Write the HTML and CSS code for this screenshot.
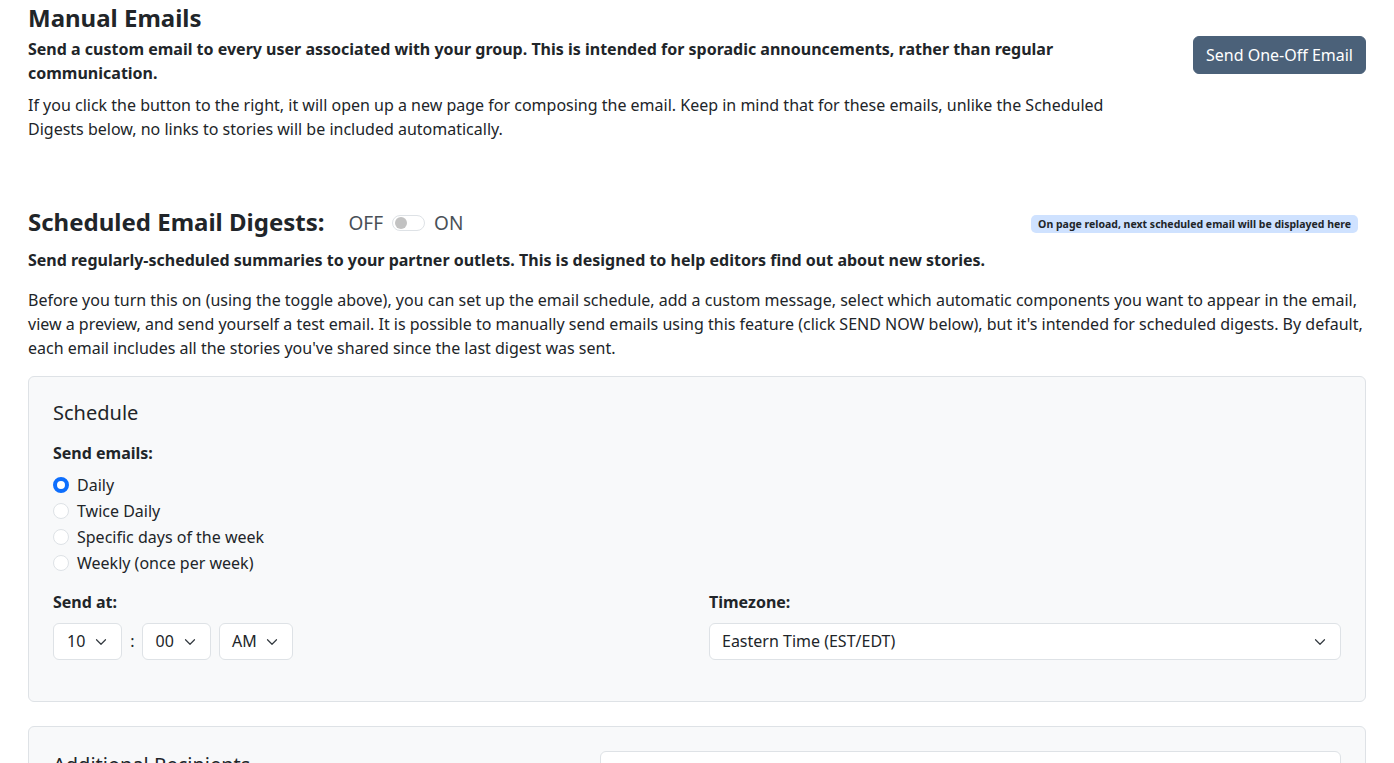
FILE: index.html
```html
<!DOCTYPE html>
<html lang="en">
<head>
<meta charset="utf-8">
<title>Email Settings</title>
<link rel="stylesheet" href="styles.css">
</head>
<body>
<main class="page">
  <section class="manual">
    <h4 class="title">Manual Emails</h4>
    <div class="manual-row">
      <div class="manual-text">
        <p class="lead-bold">Send a custom email to every user associated with your group. This is intended for sporadic announcements, rather than regular communication.</p>
        <p class="body-text">If you click the button to the right, it will open up a new page for composing the email. Keep in mind that for these emails, unlike the Scheduled Digests below, no links to stories will be included automatically.</p>
      </div>
      <div class="manual-action">
        <button class="btn-slate" type="button">Send One-Off Email</button>
      </div>
    </div>
  </section>

  <section class="digests">
    <div class="digest-head">
      <h4 class="title title-inline">Scheduled Email Digests:</h4>
      <div class="toggle-group">
        <span class="toggle-label">OFF</span>
        <span class="switch"><span class="knob"></span></span>
        <span class="toggle-label">ON</span>
      </div>
      <span class="badge">On page reload, next scheduled email will be displayed here</span>
    </div>
    <p class="lead-bold digest-lead">Send regularly-scheduled summaries to your partner outlets. This is designed to help editors find out about new stories.</p>
    <p class="body-text digest-body">Before you turn this on (using the toggle above), you can set up the email schedule, add a custom message, select which automatic components you want to appear in the email, view a preview, and send yourself a test email. It is possible to manually send emails using this feature (click SEND NOW below), but it's intended for scheduled digests. By default, each email includes all the stories you've shared since the last digest was sent.</p>

    <div class="card">
      <h5 class="card-title">Schedule</h5>
      <div class="form-label">Send emails:</div>
      <div class="radios">
        <label class="check"><span class="radio checked"></span>Daily</label>
        <label class="check"><span class="radio"></span>Twice Daily</label>
        <label class="check"><span class="radio"></span>Specific days of the week</label>
        <label class="check"><span class="radio"></span>Weekly (once per week)</label>
      </div>
      <div class="grid-2">
        <div class="col">
          <div class="form-label form-label-lg">Send at:</div>
          <div class="time-row">
            <div class="select">10<svg class="chev" viewBox="0 0 16 16"><path d="M2 5l6 6 6-6"/></svg></div>
            <span class="colon">:</span>
            <div class="select">00<svg class="chev" viewBox="0 0 16 16"><path d="M2 5l6 6 6-6"/></svg></div>
            <div class="select select-ampm">AM<svg class="chev" viewBox="0 0 16 16"><path d="M2 5l6 6 6-6"/></svg></div>
          </div>
        </div>
        <div class="col">
          <div class="form-label form-label-lg">Timezone:</div>
          <div class="select select-wide">Eastern Time (EST/EDT)<svg class="chev" viewBox="0 0 16 16"><path d="M2 5l6 6 6-6"/></svg></div>
        </div>
      </div>
    </div>

    <div class="card card-2">
      <div class="grid-57">
        <h5 class="card-title">Additional Recipients</h5>
        <div class="input"></div>
      </div>
    </div>
  </section>
</main>
</body>
</html>
```
FILE: styles.css
```css
* { box-sizing: border-box; }
html, body { margin: 0; padding: 0; background: #ffffff; }
body {
  font-family: "Noto Sans", "DejaVu Sans", sans-serif;
  font-size: 16px;
  line-height: 24px;
  color: #212529;
  overflow: hidden;
  height: 763px;
}
.page { padding: 4px 28px 0 28px; }
p { margin: 0; }

.title {
  font-size: 24px;
  line-height: 28.8px;
  font-weight: 700;
  margin: 0 0 4px 0;
}
.manual-row {
  display: flex;
  justify-content: space-between;
  align-items: flex-start;
}
.manual-text { width: 1114px; }
.lead-bold { font-weight: 700; }
.body-text { margin-top: 8px; }
.btn-slate {
  font-family: inherit;
  font-size: 16px;
  line-height: 24px;
  color: #ffffff;
  background: #4b6179;
  border: 1px solid #4b6179;
  border-radius: 6px;
  padding: 6px 12px;
  margin-top: -1px;
}

.digests { margin-top: 67px; }
.digest-head {
  display: flex;
  align-items: center;
  height: 28.8px;
}
.title-inline { margin: 0; font-weight: 700; }
.toggle-group {
  display: flex;
  align-items: center;
  margin-left: 24px;
  color: #495057;
  font-size: 19px;
  line-height: 24px;
  padding-top: 2px;
}
.switch {
  width: 33px;
  height: 16px;
  border: 1px solid #dee2e6;
  border-radius: 8px;
  margin: 0 9px 0 9px;
  display: flex;
  align-items: center;
  padding-left: 2px;
  background: #fff;
}
.knob {
  width: 12px;
  height: 12px;
  border-radius: 50%;
  background: #c2c2c2;
}
.badge {
  margin-left: auto;
  margin-right: 8px;
  margin-top: 3px;
  background: #cfe2ff;
  color: #212529;
  font-size: 10.5px;
  font-weight: 700;
  line-height: 12px;
  padding: 3px 7px;
  border-radius: 5px;
}
.digest-lead { margin-top: 11px; }
.digest-body { margin-top: 16px; }

.card {
  margin-top: 16px;
  background: #f8f9fa;
  border: 1px solid #dee2e6;
  border-radius: 6px;
  padding: 24px 24px 25px 24px;
}
.card-2 { margin-top: 24px; }
.card-title {
  font-size: 20px;
  line-height: 24px;
  font-weight: 400;
  margin: 0 0 16px 0;
}
.form-label {
  font-weight: 700;
  margin-bottom: 8px;
}
.form-label-lg { margin-bottom: 9px; }
.radios { margin-bottom: 15px; }
.check {
  display: flex;
  align-items: center;
  min-height: 24px;
  margin-bottom: 2px;
}
.radio {
  width: 16px;
  height: 16px;
  border-radius: 50%;
  border: 1px solid #dee2e6;
  background: #fff;
  margin-right: 8px;
  flex: none;
}
.radio.checked {
  border: 4px solid #0d6efd;
  background: #fff;
}
.grid-2 {
  display: grid;
  grid-template-columns: 1fr 1fr;
  column-gap: 24px;
}
.time-row {
  display: flex;
  align-items: center;
  margin-bottom: 16px;
}
.select {
  position: relative;
  height: 37px;
  background: #fff;
  border: 1px solid #dee2e6;
  border-radius: 6px;
  padding: 6px 36px 6px 13px;
  font-size: 16px;
  line-height: 23px;
  color: #212529;
  white-space: nowrap;
}
.col > .select-wide { margin-bottom: 16px; }
.select-ampm { margin-left: 8px; padding-left: 12px; padding-right: 35px; }
.select-wide { padding-left: 12px; }
.chev {
  position: absolute;
  right: 14px;
  top: 12px;
  width: 12px;
  height: 12px;
  fill: none;
  stroke: #343a40;
  stroke-width: 1.6;
  stroke-linecap: round;
  stroke-linejoin: round;
}
.colon { margin: 0 7px 0 8px; }

.grid-57 {
  display: grid;
  grid-template-columns: 523px 1fr;
  column-gap: 24px;
}
.input {
  height: 38px;
  background: #fff;
  border: 1px solid #dee2e6;
  border-radius: 6px;
}
.card-2 .card-title { margin-top: 2px; }
```
